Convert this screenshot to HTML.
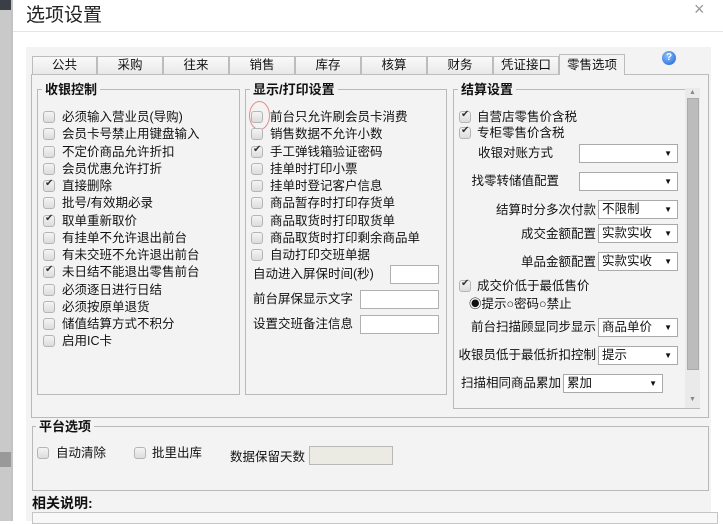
<!DOCTYPE html>
<html><head><meta charset="utf-8"><style>
*{margin:0;padding:0;box-sizing:border-box}
body{width:723px;height:521px;overflow:hidden;background:#fff;position:relative;font-family:"Liberation Sans","Noto Sans CJK SC",sans-serif;font-size:12.5px;color:#111}
.a{position:absolute}
.cb{position:absolute;width:12px;height:12px;border:1px solid #b5b5b5;border-radius:3px;background:linear-gradient(#f4f4f4,#dcdcdc)}
.cb.on::after{content:"✔";position:absolute;left:1px;top:-3px;font-size:10px;color:#333}
.t{position:absolute;white-space:nowrap;line-height:14px}
.gb{position:absolute;border:1px solid #b9b9b9}
.lg{position:absolute;background:#f3f3f3;font-weight:bold;font-size:13px;padding:0 3px;line-height:14px}
.in{position:absolute;background:#fff;border:1px solid #b0b0b0}
.sel{position:absolute;background:#fff;border:1px solid #a9a9a9;font-size:12.5px;line-height:16px;padding-left:3px}
.sel::after{content:"▼";position:absolute;right:5px;top:1px;font-size:8px}
.tab{position:absolute;top:56px;height:18px;border:1px solid #bdbdbd;border-bottom:none;background:linear-gradient(#fafafa,#e9e9e9);text-align:center;font-size:12.5px;line-height:17px}
.r{text-align:right}
</style></head><body>
<div class="a" style="left:0;top:0;width:11px;height:521px;background:#c9c9c9"></div>
<div class="a" style="left:0;top:0;width:11px;height:10px;background:#3a3f45"></div>
<div class="a" style="left:0;top:452px;width:11px;height:15px;background:#999"></div>
<div class="a" style="left:11px;top:0;width:2px;height:521px;background:#888;opacity:.5"></div>
<div class="t" style="left:26px;top:4px;font-size:19px;line-height:24px;color:#222">选项设置</div>
<div class="t" style="left:694px;top:2px;font-size:18px;color:#999">×</div>
<div class="a" style="left:13px;top:31px;width:710px;height:1px;background:#e5e5e5"></div>
<div class="a" style="left:26px;top:47px;width:685px;height:474px;background:#f3f3f3"></div>

<div class="tab" style="left:32px;width:65px">公共</div>
<div class="tab" style="left:97px;width:66px">采购</div>
<div class="tab" style="left:163px;width:66px">往来</div>
<div class="tab" style="left:229px;width:66px">销售</div>
<div class="tab" style="left:295px;width:66px">库存</div>
<div class="tab" style="left:361px;width:66px">核算</div>
<div class="tab" style="left:427px;width:66px">财务</div>
<div class="tab" style="left:493px;width:66px">凭证接口</div>
<div class="tab" style="left:559px;top:54px;height:21px;width:66px;background:#f3f3f3;line-height:21px">零售选项</div>
<div class="a" style="left:662px;top:51px;width:14px;height:14px;border-radius:50%;background:radial-gradient(circle at 40% 35%,#8cc0ff,#1a5fd0);color:#fff;font-size:10px;font-weight:bold;text-align:center;line-height:14px">?</div>
<div class="gb" style="left:31px;top:74px;width:678px;height:344px;border-top:1px solid #bdbdbd"></div>
<div class="a" style="left:560px;top:73px;width:64px;height:2px;background:#f3f3f3"></div>

<!-- left group -->
<div class="gb" style="left:37px;top:89px;width:203px;height:306px"></div>
<div class="lg" style="left:42px;top:83px">收银控制</div>
<div class="cb" style="left:43px;top:111px"></div><div class="t" style="left:62px;top:110px">必须输入营业员(导购)</div>
<div class="cb" style="left:43px;top:128px"></div><div class="t" style="left:62px;top:127px">会员卡号禁止用键盘输入</div>
<div class="cb" style="left:43px;top:146px"></div><div class="t" style="left:62px;top:145px">不定价商品允许折扣</div>
<div class="cb" style="left:43px;top:163px"></div><div class="t" style="left:62px;top:162px">会员优惠允许打折</div>
<div class="cb on" style="left:43px;top:180px"></div><div class="t" style="left:62px;top:179px">直接删除</div>
<div class="cb" style="left:43px;top:197px"></div><div class="t" style="left:62px;top:196px">批号/有效期必录</div>
<div class="cb on" style="left:43px;top:215px"></div><div class="t" style="left:62px;top:214px">取单重新取价</div>
<div class="cb" style="left:43px;top:232px"></div><div class="t" style="left:62px;top:231px">有挂单不允许退出前台</div>
<div class="cb" style="left:43px;top:249px"></div><div class="t" style="left:62px;top:248px">有未交班不允许退出前台</div>
<div class="cb on" style="left:43px;top:266px"></div><div class="t" style="left:62px;top:265px">未日结不能退出零售前台</div>
<div class="cb" style="left:43px;top:284px"></div><div class="t" style="left:62px;top:283px">必须逐日进行日结</div>
<div class="cb" style="left:43px;top:301px"></div><div class="t" style="left:62px;top:300px">必须按原单退货</div>
<div class="cb" style="left:43px;top:318px"></div><div class="t" style="left:62px;top:317px">储值结算方式不积分</div>
<div class="cb" style="left:43px;top:335px"></div><div class="t" style="left:62px;top:334px">启用IC卡</div>

<!-- middle group -->
<div class="gb" style="left:245px;top:89px;width:202px;height:306px"></div>
<div class="lg" style="left:250px;top:83px">显示/打印设置</div>
<div class="a" style="left:249px;top:101px;width:21px;height:29px;border:1px solid #e88;border-radius:50%"></div>
<div class="cb" style="left:251px;top:111px"></div><div class="t" style="left:270px;top:110px">前台只允许刷会员卡消费</div>
<div class="cb" style="left:251px;top:128px"></div><div class="t" style="left:270px;top:127px">销售数据不允许小数</div>
<div class="cb on" style="left:251px;top:146px"></div><div class="t" style="left:270px;top:145px">手工弹钱箱验证密码</div>
<div class="cb" style="left:251px;top:163px"></div><div class="t" style="left:270px;top:162px">挂单时打印小票</div>
<div class="cb" style="left:251px;top:180px"></div><div class="t" style="left:270px;top:179px">挂单时登记客户信息</div>
<div class="cb" style="left:251px;top:197px"></div><div class="t" style="left:270px;top:196px">商品暂存时打印存货单</div>
<div class="cb" style="left:251px;top:215px"></div><div class="t" style="left:270px;top:214px">商品取货时打印取货单</div>
<div class="cb" style="left:251px;top:232px"></div><div class="t" style="left:270px;top:231px">商品取货时打印剩余商品单</div>
<div class="cb" style="left:251px;top:249px"></div><div class="t" style="left:270px;top:248px">自动打印交班单据</div>
<div class="t" style="left:253px;top:267px">自动进入屏保时间(秒)</div><div class="in" style="left:390px;top:265px;width:49px;height:19px"></div>
<div class="t" style="left:253px;top:292px">前台屏保显示文字</div><div class="in" style="left:360px;top:290px;width:79px;height:19px"></div>
<div class="t" style="left:253px;top:317px">设置交班备注信息</div><div class="in" style="left:360px;top:315px;width:79px;height:19px"></div>

<!-- right group -->
<div class="gb" style="left:453px;top:89px;width:247px;height:320px"></div>
<div class="lg" style="left:458px;top:83px">结算设置</div>
<div class="a" style="left:685px;top:88px;width:15px;height:320px;background:#eaeaea"></div>
<div class="a" style="left:687px;top:98px;width:12px;height:272px;background:#bcbcbc;border:1px solid #aaa"></div>
<div class="t" style="left:689px;top:86px;font-size:7px;color:#888">▲</div>
<div class="t" style="left:689px;top:393px;font-size:7px;color:#888">▼</div>
<div class="cb on" style="left:459px;top:111px"></div><div class="t" style="left:477px;top:110px">自营店零售价含税</div>
<div class="cb on" style="left:459px;top:127px"></div><div class="t" style="left:477px;top:126px">专柜零售价含税</div>
<div class="t r" style="left:453px;width:100px;top:146px">收银对账方式</div><div class="sel" style="left:579px;top:144px;width:99px;height:19px"></div>
<div class="t r" style="left:453px;width:106px;top:174px">找零转储值配置</div><div class="sel" style="left:579px;top:172px;width:99px;height:19px"></div>
<div class="t r" style="left:453px;width:143px;top:203px">结算时分多次付款</div><div class="sel" style="left:598px;top:200px;width:80px;height:19px">不限制</div>
<div class="t r" style="left:453px;width:143px;top:227px">成交金额配置</div><div class="sel" style="left:598px;top:224px;width:80px;height:19px">实款实收</div>
<div class="t r" style="left:453px;width:143px;top:255px">单品金额配置</div><div class="sel" style="left:598px;top:252px;width:80px;height:19px">实款实收</div>
<div class="cb on" style="left:459px;top:280px"></div><div class="t" style="left:477px;top:279px">成交价低于最低售价</div>
<div class="t" style="left:469px;top:297px">◉提示○密码○禁止</div>
<div class="t r" style="left:453px;width:143px;top:320px">前台扫描顾显同步显示</div><div class="sel" style="left:598px;top:318px;width:80px;height:19px">商品单价</div>
<div class="t r" style="left:453px;width:143px;top:348px">收银员低于最低折扣控制</div><div class="sel" style="left:598px;top:346px;width:80px;height:19px">提示</div>
<div class="t r" style="left:453px;width:108px;top:376px">扫描相同商品累加</div><div class="sel" style="left:563px;top:374px;width:100px;height:19px">累加</div>

<!-- platform -->
<div class="gb" style="left:32px;top:426px;width:677px;height:65px"></div>
<div class="lg" style="left:36px;top:420px">平台选项</div>
<div class="cb" style="left:37px;top:447px"></div><div class="t" style="left:56px;top:446px">自动清除</div>
<div class="cb" style="left:134px;top:447px"></div><div class="t" style="left:152px;top:446px">批里出库</div>
<div class="t" style="left:230px;top:450px">数据保留天数</div>
<div class="a" style="left:309px;top:446px;width:84px;height:19px;background:#ebebe4;border:1px solid #b8b8b8"></div>
<div class="t" style="left:32px;top:496px;font-weight:bold;font-size:14px">相关说明:</div>
<div class="a" style="left:32px;top:512px;width:686px;height:12px;background:#f8f8f8;border:1px solid #c5c5c5"></div>
</body></html>
